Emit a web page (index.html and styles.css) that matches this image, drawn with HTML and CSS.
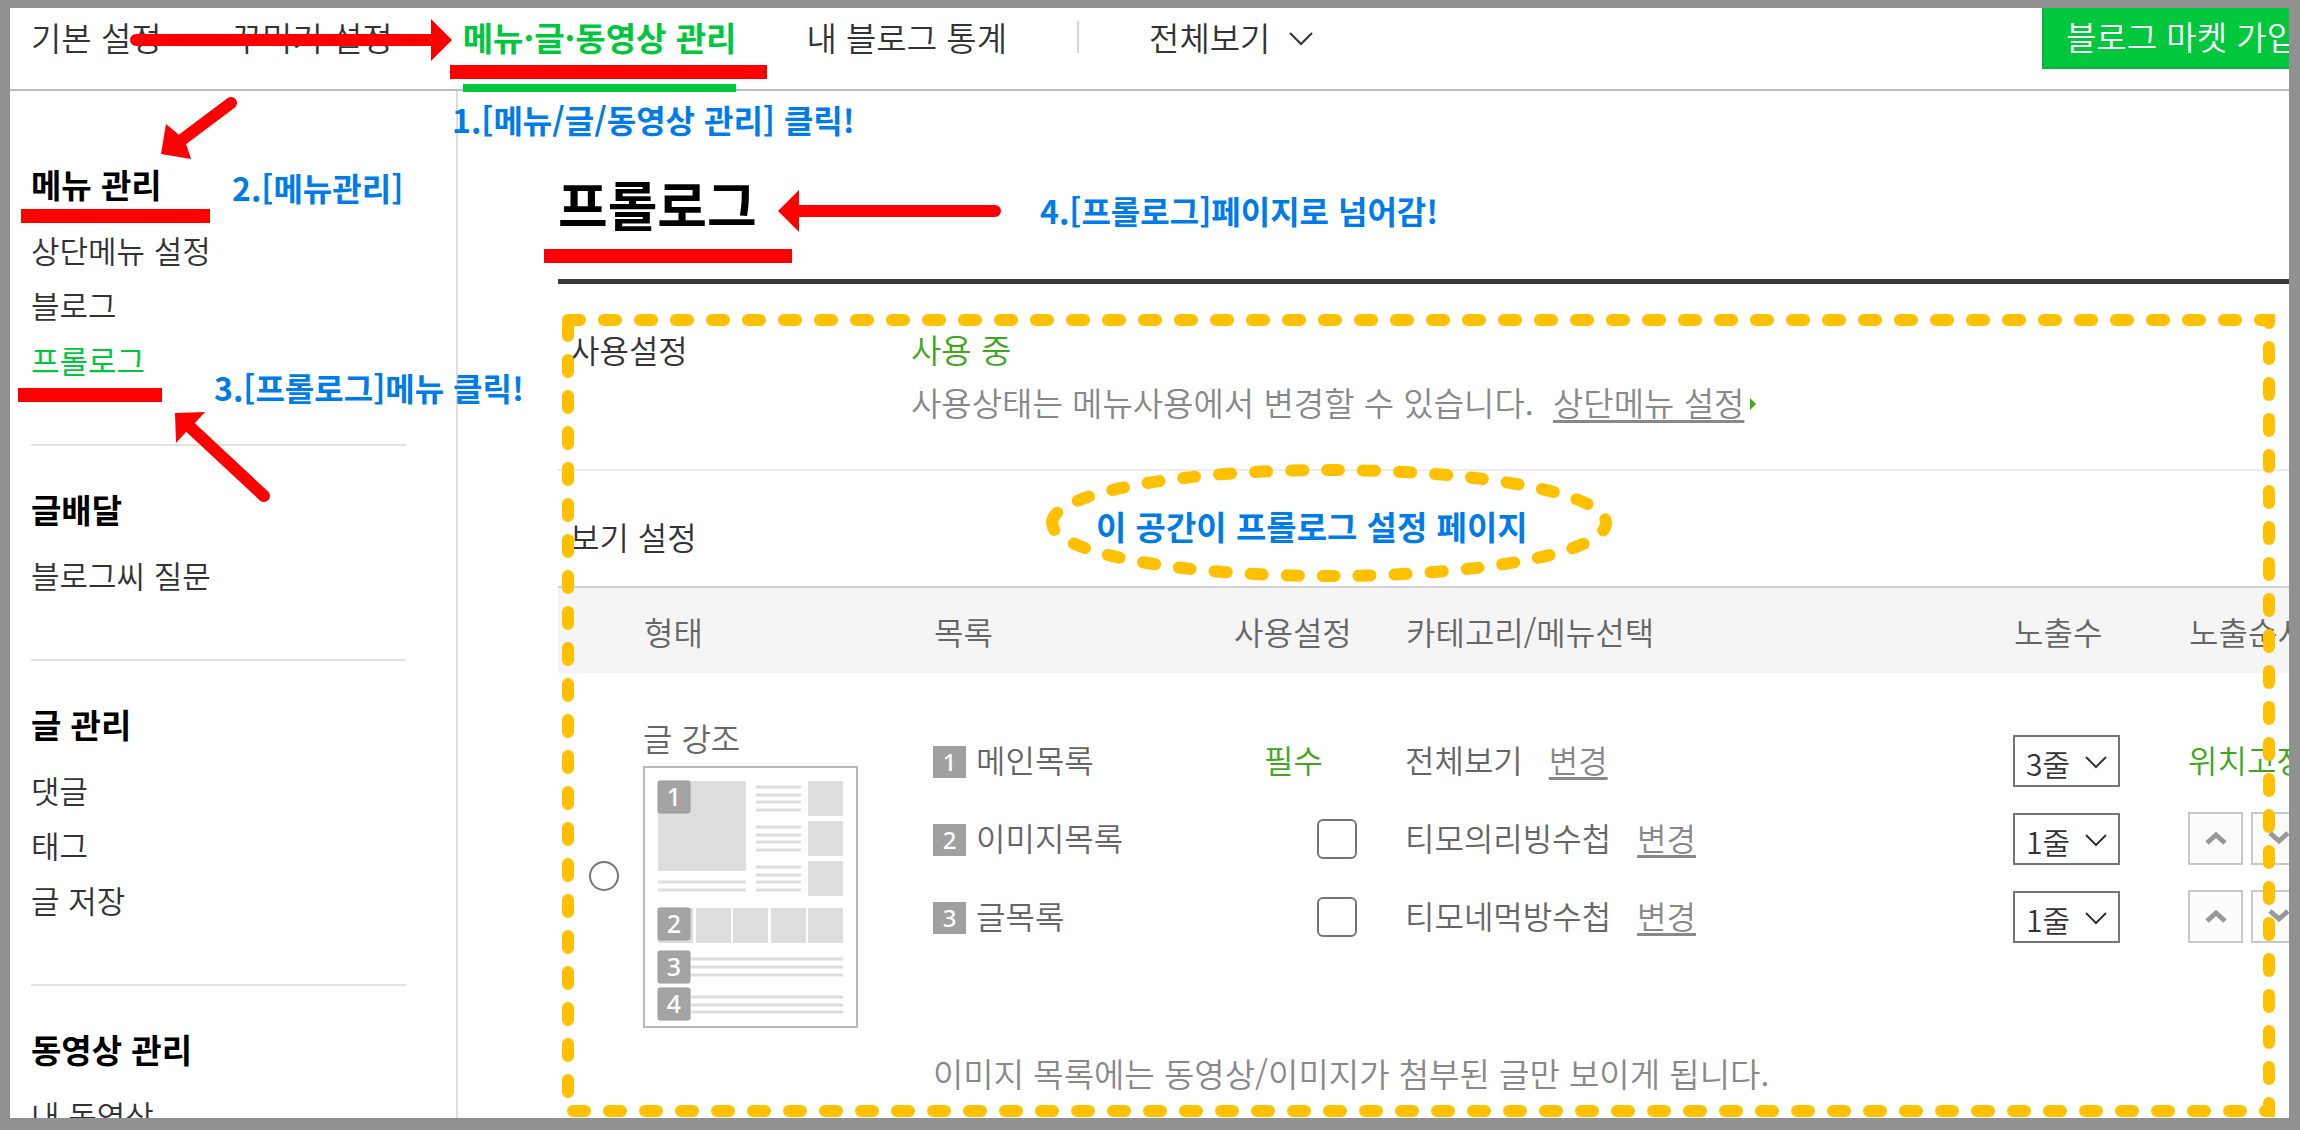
FILE: index.html
```html
<!DOCTYPE html>
<html lang="ko">

<head>
    <meta charset="UTF-8">
    <meta name="viewport" content="width=device-width, initial-scale=1.0">
    <title>프롤로그 - 블로그 관리</title>
    <link rel="stylesheet" href="styles.css">
</head>

<body>
    <div class="frame">
        <header class="header">
            <nav class="tabs">
                <a href="#">기본 설정</a>
                <a href="#">꾸미기 설정</a>
                <a href="#" class="active">메뉴·글·동영상 관리</a>
                <a href="#">내 블로그 통계</a>
                <span class="tab-divider"></span>
                <a href="#">전체보기
                    <svg class="tab-arrow" width="26" height="16" viewBox="0 0 26 16"><path d="M2 2l11 11L24 2" fill="none" stroke="#333" stroke-width="2"/></svg>
                </a>
            </nav>
            <button type="button" class="market-button">블로그 마켓 가입</button>
        </header>

        <div class="body">
            <aside class="sidebar">
                <section>
                    <h2>메뉴 관리</h2>
                    <ul>
                        <li><a href="#">상단메뉴 설정</a></li>
                        <li><a href="#">블로그</a></li>
                        <li><a href="#" class="active">프롤로그</a></li>
                    </ul>
                </section>
                <section>
                    <h2>글배달</h2>
                    <ul>
                        <li><a href="#">블로그씨 질문</a></li>
                    </ul>
                </section>
                <section>
                    <h2>글 관리</h2>
                    <ul>
                        <li><a href="#">댓글</a></li>
                        <li><a href="#">태그</a></li>
                        <li><a href="#">글 저장</a></li>
                    </ul>
                </section>
                <section>
                    <h2>동영상 관리</h2>
                    <ul>
                        <li><a href="#">내 동영상</a></li>
                    </ul>
                </section>
            </aside>

            <main class="main">
                <h1>프롤로그</h1>

                <div class="setting">
                    <h3>사용설정</h3>
                    <div class="setting-value">
                        <p class="green">사용 중</p>
                        <p>사용상태는 메뉴사용에서 변경할 수 있습니다. <a href="#" class="menu-link">상단메뉴 설정</a><svg class="menu-arrow" width="6" height="12" viewBox="0 0 6 12"><path d="M0 0l6 6-6 6z" fill="#3eaf0e"/></svg></p>
                    </div>
                </div>

                <div class="setting view">
                    <h3>보기 설정</h3>
                </div>

                <table class="list">
                    <colgroup>
                        <col class="col-type">
                        <col class="col-name">
                        <col class="col-use">
                        <col>
                        <col class="col-count">
                        <col class="col-order">
                    </colgroup>
                    <thead>
                        <tr>
                            <th class="type">형태</th>
                            <th>목록</th>
                            <th>사용설정</th>
                            <th>카테고리/메뉴선택</th>
                            <th>노출수</th>
                            <th>노출순서</th>
                        </tr>
                    </thead>
                    <tbody>
                        <tr class="first">
                            <td rowspan="4" class="type-cell">
                                <div class="type-option">
                                    <input type="radio" id="typePost" name="type">
                                    <label for="typePost">
                                        글 강조
                                        <svg class="thumb" width="215" height="262" viewBox="0 0 215 262">
                                            <rect x="1" y="1" width="213" height="260" fill="#fff" stroke="#b9b9b9" stroke-width="2"/>
                                            <g fill="#ddd">
                                                <rect x="15" y="15" width="88" height="90"/>
                                                <rect x="165" y="15" width="35" height="35"/>
                                                <rect x="165" y="55" width="35" height="35"/>
                                                <rect x="165" y="95" width="35" height="35"/>
                                                <rect x="15" y="142" width="35" height="35"/>
                                                <rect x="53" y="142" width="35" height="35"/>
                                                <rect x="90" y="142" width="35" height="35"/>
                                                <rect x="128" y="142" width="35" height="35"/>
                                                <rect x="165" y="142" width="35" height="35"/>
                                            </g>
                                            <g stroke="#ddd" stroke-width="3">
                                                <path d="M113 21h45M113 29h45M113 36h45M113 44h45"/>
                                                <path d="M113 61h45M113 69h45M113 76h45M113 84h45"/>
                                                <path d="M113 101h45M113 109h45M113 116h45M113 124h45"/>
                                                <path d="M15 116h88M15 124h88"/>
                                                <path d="M48 193h152M48 201h152M48 209h152"/>
                                                <path d="M48 231h152M48 239h152M48 246h152"/>
                                            </g>
                                            <g fill="#a4a4a4" stroke="#999">
                                                <rect x="15" y="15" width="32" height="32" rx="2"/>
                                                <rect x="15" y="142" width="32" height="32" rx="2"/>
                                                <rect x="15" y="185" width="32" height="32" rx="2"/>
                                                <rect x="15" y="222" width="32" height="32" rx="2"/>
                                            </g>
                                            <g class="thumb-num">
                                                <text x="31" y="40">1</text>
                                                <text x="31" y="167">2</text>
                                                <text x="31" y="210">3</text>
                                                <text x="31" y="247">4</text>
                                            </g>
                                        </svg>
                                    </label>
                                </div>
                            </td>
                            <td><span class="num">1</span>메인목록</td>
                            <td class="required green">필수</td>
                            <td>전체보기<a href="#" class="change">변경</a></td>
                            <td>
                                <div class="select">
                                    <select aria-label="메인목록 노출수"><option>3줄</option></select>
                                    <svg width="24" height="14" viewBox="0 0 24 14"><path d="M2 2l10 10L22 2" fill="none" stroke="#333" stroke-width="2"/></svg>
                                </div>
                            </td>
                            <td class="green">위치고정</td>
                        </tr>
                        <tr>
                            <td><label for="useImage"><span class="num">2</span>이미지목록</label></td>
                            <td class="use"><input type="checkbox" id="useImage"></td>
                            <td>티모의리빙수첩<a href="#" class="change">변경</a></td>
                            <td>
                                <div class="select">
                                    <select aria-label="이미지목록 노출수"><option>1줄</option></select>
                                    <svg width="24" height="14" viewBox="0 0 24 14"><path d="M2 2l10 10L22 2" fill="none" stroke="#333" stroke-width="2"/></svg>
                                </div>
                            </td>
                            <td>
                                <div class="order">
                                    <button type="button" aria-label="위로"><svg width="22" height="14" viewBox="0 0 22 14"><path d="M2 12l9-8 9 8" fill="none" stroke="#999" stroke-width="5"/></svg></button>
                                    <button type="button" aria-label="아래로"><svg width="22" height="14" viewBox="0 0 22 14"><path d="M2 2l9 8 9-8" fill="none" stroke="#999" stroke-width="5"/></svg></button>
                                </div>
                            </td>
                        </tr>
                        <tr>
                            <td><label for="usePost"><span class="num">3</span>글목록</label></td>
                            <td class="use"><input type="checkbox" id="usePost"></td>
                            <td>티모네먹방수첩<a href="#" class="change">변경</a></td>
                            <td>
                                <div class="select">
                                    <select aria-label="글목록 노출수"><option>1줄</option></select>
                                    <svg width="24" height="14" viewBox="0 0 24 14"><path d="M2 2l10 10L22 2" fill="none" stroke="#333" stroke-width="2"/></svg>
                                </div>
                            </td>
                            <td>
                                <div class="order">
                                    <button type="button" aria-label="위로"><svg width="22" height="14" viewBox="0 0 22 14"><path d="M2 12l9-8 9 8" fill="none" stroke="#999" stroke-width="5"/></svg></button>
                                    <button type="button" aria-label="아래로"><svg width="22" height="14" viewBox="0 0 22 14"><path d="M2 2l9 8 9-8" fill="none" stroke="#999" stroke-width="5"/></svg></button>
                                </div>
                            </td>
                        </tr>
                        <tr>
                            <td colspan="5" class="note">이미지 목록에는 동영상/이미지가 첨부된 글만 보이게 됩니다.</td>
                        </tr>
                    </tbody>
                </table>
            </main>
        </div>

        <!-- guide marks drawn over the page -->
        <svg class="outline"><rect x="6" y="6"/></svg>
        <svg class="bubble" width="566" height="118" viewBox="0 0 566 118"><path d="M6 59A277 53 0 0 1 560 59A277 53 0 0 1 6 59"/></svg>
        <svg class="arrows" width="1000" height="510" viewBox="10 8 1000 510">
            <path class="bar" d="M450 72h317M21 216h189M18 395h144M544 256h248"/>
            <path class="shaft" d="M136 40h300M231 103l-52 39M264 496l-74-69M995 211H790"/>
            <path class="head" d="M452 40l-21-21v42zM161 154l5-30 12 10 8 10 5 15zM175 413l30-1-11 12-8 8-10 11zM778 211l21-21v42z"/>
        </svg>
        <p class="guide guide-1">1.[메뉴/글/동영상 관리] 클릭!</p>
        <p class="guide guide-2">2.[메뉴관리]</p>
        <p class="guide guide-3">3.[프롤로그]메뉴 클릭!</p>
        <p class="guide guide-4">4.[프롤로그]페이지로 넘어감!</p>
        <p class="guide guide-5">이 공간이 프롤로그 설정 페이지</p>
    </div>
</body>

</html>
```
FILE: styles.css
```css
* {
    box-sizing: border-box;
}

body,
h1,
h2,
h3,
p,
ul {
    margin: 0;
    padding: 0;
}

body {
    font-family: "Noto Sans CJK KR", sans-serif;
    font-weight: 350;
    font-size: 32px;
    color: #333;
}

ul {
    list-style: none;
}

a {
    color: inherit;
    text-decoration: none;
}

button,
select {
    font: inherit;
}

.frame {
    position: relative;
    display: flex;
    flex-direction: column;
    height: 100vh;
    overflow: hidden;
    border: solid #919191;
    border-width: 8px 11px 12px 10px;
    background-color: #fff;
}

/* header */
.header {
    display: flex;
    flex: none;
    justify-content: space-between;
    height: 83px;
    border-bottom: 2px solid #bbb;
}

.tabs {
    display: flex;
    align-items: center;
    gap: 70px;
    height: 58px;
    padding-left: 21px;
    font-size: 33px;
    line-height: 56px;
    white-space: nowrap;
}

.tabs .active {
    position: relative;
    font-weight: 700;
    color: #00c73c;
}

.tabs .active::after {
    content: "";
    position: absolute;
    left: 0;
    right: 0;
    bottom: -27px;
    height: 8px;
    background-color: #00c73c;
}

.tab-divider {
    width: 2px;
    height: 32px;
    background-color: #d5d5d5;
}

.tab-arrow {
    margin-left: 8px;
    vertical-align: 4px;
}

.market-button {
    flex: none;
    width: 277px;
    height: 61px;
    margin-right: -30px;
    padding: 0 0 4px 22px;
    border: solid #0fb23c;
    border-width: 0 0 2px 2px;
    background-color: #00c73c;
    color: #fff;
    font-size: 33px;
    line-height: 54px;
    text-align: left;
    white-space: nowrap;
}

.body {
    display: flex;
    flex: 1;
    min-height: 0;
}

/* sidebar */
.sidebar {
    flex: none;
    width: 448px;
    padding: 30px 50px 0 21px;
    border-right: 2px solid #ddd;
}

.sidebar section {
    padding: 35px 0 57px;
    border-bottom: 2px solid #e2e2e2;
}

.sidebar h2 {
    margin-bottom: 10px;
    color: #000;
    font-size: 33px;
    font-weight: 700;
    line-height: 56px;
}

.sidebar li {
    font-size: 31px;
    line-height: 55px;
}

.sidebar .active {
    color: #00c73c;
    font-weight: 400;
}

/* main */
.main {
    flex: 1;
    min-width: 0;
    padding: 73px 0 0 100px;
}

h1 {
    padding-bottom: 35px;
    border-bottom: 5px solid #393939;
    color: #000;
    font-size: 54px;
    font-weight: 700;
    line-height: 80px;
}

.setting {
    display: flex;
    padding: 39px 0 40px 12px;
    border-bottom: 2px solid #ececec;
    line-height: 53px;
}

.setting.view {
    padding-bottom: 23px;
    border-bottom: 0;
}

.setting h3 {
    flex: none;
    width: 341px;
    font-size: 32px;
    font-weight: 350;
}

.setting-value {
    color: #888;
    font-size: 33px;
    white-space: nowrap;
}

.green,
.list .green {
    color: #3fa71c;
}

.menu-link,
.change {
    color: #888;
    text-decoration: underline;
    text-decoration-thickness: 3px;
    text-underline-offset: 4px;
    text-decoration-skip-ink: none;
}

.menu-link {
    margin-left: 10px;
}

.menu-arrow {
    margin-left: 6px;
    vertical-align: 6px;
}

.list {
    width: calc(100% + 78px);
    border-collapse: collapse;
    border-top: 2px solid #d2d2d2;
    table-layout: fixed;
    color: #666;
    text-align: left;
    white-space: nowrap;
}

.col-type {
    width: 375px;
}

.col-name {
    width: 300px;
}

.col-use {
    width: 172px;
}

.col-count {
    width: 175px;
}

.col-order {
    width: 179px;
}

.list th {
    height: 86px;
    padding: 0 0 0 1px;
    background-color: #f5f5f5;
    font-weight: 350;
}

.list th.type {
    padding-left: 86px;
}

.list td {
    height: 78px;
    padding: 0 0 4px;
    line-height: 52px;
}

.list .first td {
    height: 127px;
    padding-top: 49px;
}

.list .first .type-cell {
    padding: 40px 0 0 31px;
    vertical-align: top;
}

.type-option {
    display: flex;
    align-items: center;
    gap: 24px;
}

.type-option label {
    line-height: 48px;
}

.type-option input {
    width: 30px;
    height: 30px;
    margin: 11px 0 0;
    appearance: none;
    border: 2px solid #757575;
    border-radius: 50%;
}

.thumb {
    display: block;
    margin-top: 5px;
}

.thumb-num {
    fill: #fff;
    font-family: "Noto Sans", sans-serif;
    font-size: 25px;
    font-weight: 500;
    text-anchor: middle;
}

.num {
    display: inline-block;
    width: 33px;
    height: 32px;
    margin-right: 10px;
    background-color: #a0a0a0;
    color: #fff;
    font-family: "Noto Sans", sans-serif;
    font-size: 24px;
    font-weight: 500;
    line-height: 32px;
    text-align: center;
    vertical-align: 2px;
}

.list .required {
    padding-left: 31px;
}

.list .use {
    padding-left: 84px;
}

.use input {
    display: block;
    width: 40px;
    height: 40px;
    margin: 4px 0 0;
    appearance: none;
    border: 2px solid #757575;
    border-radius: 6px;
}

.change {
    margin-left: 26px;
}

.select {
    position: relative;
    width: 107px;
    height: 52px;
    margin-top: 4px;
}

.select select {
    display: block;
    width: 100%;
    height: 100%;
    padding: 0 0 4px 11px;
    appearance: none;
    border: 2px solid #757575;
    border-radius: 0;
    background-color: #fff;
    color: #333;
    font-size: 30px;
}

.select svg {
    position: absolute;
    top: 20px;
    right: 12px;
    pointer-events: none;
}

.order {
    display: flex;
    gap: 8px;
    margin-top: 2px;
}

.order button {
    display: flex;
    align-items: center;
    justify-content: center;
    width: 55px;
    height: 53px;
    padding: 0;
    border: 2px solid #c8c8c8;
    background-color: #fcfcfc;
}

.list .note {
    padding-top: 91px;
    color: #888;
    font-size: 33px;
}

/* guide marks */
.outline,
.bubble,
.arrows {
    position: absolute;
    fill: none;
    pointer-events: none;
}

.outline,
.bubble {
    stroke: #ffc000;
    stroke-width: 12px;
    stroke-dasharray: 12 24;
    stroke-linecap: round;
}

.outline {
    top: 306px;
    left: 552px;
    width: calc(100% - 566px);
    height: calc(100% - 307px);
}

.outline rect {
    width: calc(100% - 12px);
    height: calc(100% - 12px);
}

.bubble {
    top: 456px;
    left: 1036px;
}

.arrows {
    top: 0;
    left: 0;
}

.bar {
    stroke: #f00;
    stroke-width: 14px;
}

.shaft {
    stroke: #f00;
    stroke-width: 12px;
    stroke-linecap: round;
}

.arrows .head {
    fill: #f00;
}

.guide {
    position: absolute;
    color: #007bea;
    font-size: 32px;
    font-weight: 700;
    line-height: 48px;
    white-space: nowrap;
}

.guide-1 {
    top: 87px;
    left: 442px;
}

.guide-2 {
    top: 155px;
    left: 222px;
}

.guide-3 {
    top: 355px;
    left: 204px;
}

.guide-4 {
    top: 178px;
    left: 1030px;
}

.guide-5 {
    top: 494px;
    left: 1086px;
    font-size: 33px;
}
```
